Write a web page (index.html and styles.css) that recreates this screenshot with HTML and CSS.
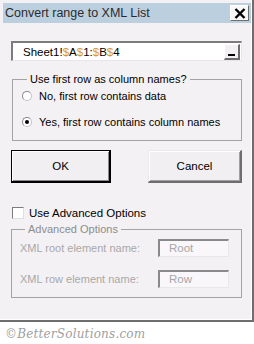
FILE: index.html
```html
<!DOCTYPE html>
<html lang="en">
<head>
    <meta charset="UTF-8">
    <title>Convert range to XML List</title>
    <link rel="stylesheet" href="styles.css">
</head>
<body>
    <div class="window">
        <div class="titlebar">
            <span class="title">Convert range to XML List</span>
            <div class="close-btn">
                <svg width="12" height="11" viewBox="0 0 12 11">
                    <path d="M1.5 1 L10.5 10 M10.5 1 L1.5 10" stroke="#000" stroke-width="2.4"/>
                </svg>
            </div>
        </div>

        <div class="content">
            <div class="range-box">
                <span class="range-text">Sheet1!<span class="dollar">$</span>A<span class="dollar">$</span>1:<span class="dollar">$</span>B<span class="dollar">$</span>4</span>
                <div class="collapse-btn"><span class="dash"></span></div>
            </div>

            <fieldset class="group">
                <legend>Use first row as column names?</legend>
                <div class="option">
                    <span class="radio"></span>
                    <span>No, first row contains data</span>
                </div>
                <div class="option">
                    <span class="radio checked"></span>
                    <span>Yes, first row contains column names</span>
                </div>
            </fieldset>

            <div class="buttons">
                <div class="btn btn-default">OK</div>
                <div class="btn btn-cancel">Cancel</div>
            </div>

            <div class="check-row">
                <span class="checkbox"></span>
                <span>Use Advanced Options</span>
            </div>

            <fieldset class="group group-disabled">
                <legend>Advanced Options</legend>
                <div class="field">
                    <span class="field-label">XML root element name:</span>
                    <div class="field-input">Root</div>
                </div>
                <div class="field">
                    <span class="field-label">XML row element name:</span>
                    <div class="field-input">Row</div>
                </div>
            </fieldset>
        </div>
    </div>

    <div class="watermark">&copy;BetterSolutions.com</div>
</body>
</html>
```

FILE: styles.css
```css
body {
    margin: 0;
    background-color: #ffffff;
    font-family: "Liberation Sans", Arial, sans-serif;
    font-size: 11px;
    color: #000;
}

.window {
    width: 254px;
    height: 322px;
    box-sizing: border-box;
    background-color: #f4f1f4;
    padding: 3px 1px 0 3px;
    border-right: 2px solid #6e6e6e;
    border-bottom: 2px solid #6e6e6e;
    box-shadow: inset -1px -1px 0 #ffffff;
}

.titlebar {
    height: 20px;
    background-color: #bccfdf;
    display: flex;
    align-items: flex-start;
    justify-content: space-between;
}

.title {
    font-size: 12.5px;
    line-height: 20px;
    padding-left: 2px;
    color: #2b2b2b;
}

.close-btn {
    width: 19px;
    height: 16px;
    margin: 2px 2px 0 0;
    box-sizing: border-box;
    background-color: #f7f7f7;
    border: 1px solid #ffffff;
    border-right: 1px solid #6e6e6e;
    border-bottom: 1px solid #6e6e6e;
    display: flex;
    align-items: center;
    justify-content: center;
}

.content {
    padding: 0 9px 0 8px;
}

.range-box {
    margin-top: 18px;
    height: 20px;
    width: 231px;
    box-sizing: border-box;
    background-color: #fff;
    border-top: 2px solid #7c7c7c;
    border-left: 2px solid #7c7c7c;
    border-right: 1px solid #e6e6e6;
    border-bottom: 1px solid #e6e6e6;
    display: flex;
    align-items: center;
    justify-content: space-between;
}

.range-text {
    padding-left: 10px;
    font-size: 11.5px;
}

.dollar {
    color: #d89a10;
}

.collapse-btn {
    width: 16px;
    height: 16px;
    box-sizing: border-box;
    margin-right: 1px;
    background-color: #f2f0f2;
    border: 1px solid #ffffff;
    border-right: 2px solid #6e6e6e;
    border-bottom: 2px solid #6e6e6e;
    display: flex;
    align-items: flex-end;
    justify-content: center;
    padding-bottom: 2px;
}

.dash {
    width: 7px;
    height: 2px;
    background-color: #000;
}

.group {
    margin: 12px 0 0 1px;
    width: 230px;
    box-sizing: border-box;
    border: 1px solid #a3a3a3;
    padding: 4px 0 0 9px;
}

.group legend {
    padding: 0 3px;
    margin-left: 5px;
}

.option {
    display: flex;
    align-items: center;
    gap: 7px;
    height: 13px;
    margin-bottom: 13px;
}

.option:last-child {
    margin-bottom: 12px;
}

.radio {
    width: 10px;
    height: 10px;
    box-sizing: border-box;
    border-radius: 50%;
    background-color: #fff;
    border: 1px solid #c4c4c4;
    border-top-color: #8a8a8a;
    border-left-color: #8a8a8a;
    display: flex;
    align-items: center;
    justify-content: center;
}

.radio.checked::after {
    content: "";
    width: 4px;
    height: 4px;
    border-radius: 50%;
    background-color: #000;
}

.buttons {
    display: flex;
    justify-content: space-between;
    margin-top: 9px;
}

.btn {
    height: 33px;
    box-sizing: border-box;
    background-color: #f1eff1;
    display: flex;
    align-items: center;
    justify-content: center;
    font-size: 11.5px;
}

.btn-default {
    width: 100px;
    border: 1px solid #000;
    border-right-width: 2px;
    border-bottom-width: 2px;
    box-shadow: inset 1px 1px 0 #ffffff, inset -1px -1px 0 #8a8a8a;
}

.btn-cancel {
    width: 94px;
    border: 1px solid #e9e9e9;
    border-right: 2px solid #6e6e6e;
    border-bottom: 2px solid #6e6e6e;
    box-shadow: inset 1px 1px 0 #ffffff, inset -1px -1px 0 #a0a0a0;
}

.check-row {
    display: flex;
    align-items: center;
    gap: 5px;
    margin: 24px 0 0 1px;
    font-size: 11.5px;
}

.checkbox {
    width: 12px;
    height: 12px;
    box-sizing: border-box;
    background-color: #fff;
    border: 1px solid #e0e0e0;
    border-top-color: #7c7c7c;
    border-left-color: #7c7c7c;
}

.group-disabled {
    margin: 4px 0 0 0;
    width: 231px;
    color: #a3a3a3;
    padding: 4px 0 0 8px;
}

.group-disabled legend {
    color: #8c8c8c;
    margin-left: 5px;
}

.field {
    display: flex;
    align-items: center;
    justify-content: space-between;
    padding-right: 12px;
    margin-top: 0;
    margin-bottom: 13px;
}

.field:last-child {
    margin-bottom: 9px;
}

.field-label {
    color: #a8a8a8;
}

.field-input {
    width: 71px;
    height: 18px;
    box-sizing: border-box;
    background-color: #f9f7f9;
    border-top: 2px solid #8a8a8a;
    border-left: 2px solid #8a8a8a;
    border-right: 1px solid #e8e8e8;
    border-bottom: 1px solid #e8e8e8;
    padding-left: 9px;
    line-height: 15px;
    color: #a8a8a8;
    font-size: 11.5px;
}

.watermark {
    margin: 5px 0 0 5px;
    font-family: "DejaVu Serif", serif;
    font-style: italic;
    font-size: 12px;
    letter-spacing: 0.2px;
    color: #a0a0a0;
}
```
